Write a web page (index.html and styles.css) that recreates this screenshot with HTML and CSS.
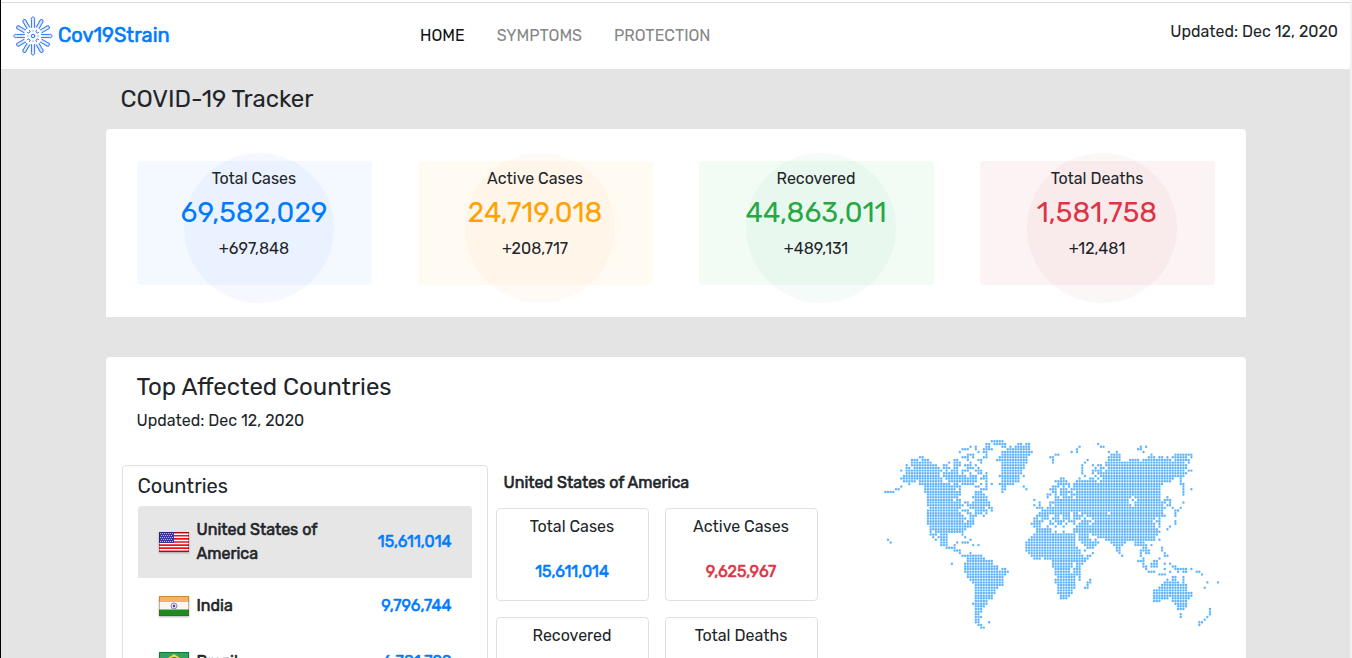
FILE: index.html
```html
<!DOCTYPE html>
<html lang="en">
<head>
<meta charset="utf-8">
<meta name="viewport" content="width=device-width, initial-scale=1">
<title>Cov19Strain</title>
<link rel="stylesheet" href="styles.css">
</head>
<body>
<div class="page">
  <header class="navbar">
    <a class="brand" href="#">
      <svg class="brand-icon" viewBox="-20 -20 40 40" aria-hidden="true">
        <defs>
          <path id="arm" d="M-1.6 -8.5V-16.4A1.8 1.8 0 1 1 1.6 -16.4V-8.5"/>
          <path id="arm-thin" d="M-1.6 -9.5V-16.4A1.7 1.7 0 1 1 1.6 -16.4V-9.5"/>
        </defs>
        <g class="brand-strokes">
          <use href="#arm"/><use href="#arm" transform="rotate(90)"/><use href="#arm" transform="rotate(180)"/><use href="#arm" transform="rotate(270)"/>
          <use href="#arm-thin" transform="rotate(30)"/><use href="#arm-thin" transform="rotate(60)"/>
          <use href="#arm-thin" transform="rotate(120)"/><use href="#arm-thin" transform="rotate(150)"/>
          <use href="#arm-thin" transform="rotate(210)"/><use href="#arm-thin" transform="rotate(240)"/>
          <use href="#arm-thin" transform="rotate(300)"/><use href="#arm-thin" transform="rotate(330)"/>
          <circle r="1.8"/>
          <path d="M-5.6 -3.4A1.5 1.5 0 1 0 -3.4 -5.6M5.6 -3.4A1.5 1.5 0 1 1 3.4 -5.6M-5.6 3.4A1.5 1.5 0 1 1 -3.4 5.6M5.6 3.4A1.5 1.5 0 1 0 3.4 5.6"/>
          <path d="M0 -5.2v.2M0 5v.2M-5.2 0h.2M5 0h.2"/>
        </g>
      </svg>
      <span>Cov19Strain</span>
    </a>
    <nav class="menu">
      <a class="menu-link active" href="#">HOME</a>
      <a class="menu-link" href="#symptoms">SYMPTOMS</a>
      <a class="menu-link" href="#protection">PROTECTION</a>
    </nav>
    <p class="updated">Updated: Dec 12, 2020</p>
  </header>

  <main class="container">
    <h1 class="title">COVID-19 Tracker</h1>
    <section class="stats">
      <article class="stat blue"><h2>Total Cases</h2><p class="stat-value">69,582,029</p><p>+697,848</p></article>
      <article class="stat orange"><h2>Active Cases</h2><p class="stat-value">24,719,018</p><p>+208,717</p></article>
      <article class="stat green"><h2>Recovered</h2><p class="stat-value">44,863,011</p><p>+489,131</p></article>
      <article class="stat red"><h2>Total Deaths</h2><p class="stat-value">1,581,758</p><p>+12,481</p></article>
    </section>

    <section class="affected">
      <div class="affected-head">
        <h2 class="title">Top Affected Countries</h2>
        <p>Updated: Dec 12, 2020</p>
      </div>
      <div class="affected-body">
        <div class="countries">
          <h3>Countries</h3>
          <ul>
            <li><button type="button" class="country selected">
              <svg class="flag" viewBox="0 0 30 20" aria-hidden="true">
                <path fill="#fff" d="M0 0h30v20H0z"/>
                <path stroke="#f01018" stroke-width="1.6" d="M0 .8h30M0 3.8h30M0 6.9h30M0 10h30M0 13.1h30M0 16.1h30M0 19.2h30"/>
                <path fill="#3a3a9c" d="M0 0h15v11H0z"/>
                <path stroke="#b4b4e0" stroke-dasharray="1 1" d="M1 1.5h13M2 3.5h12M1 5.5h13M2 7.5h12M1 9.5h13"/>
                <path fill="none" stroke="#000" stroke-opacity=".3" d="M.5 .5h29v19H.5z"/>
              </svg>
              <span class="country-name">United States of America</span><span class="country-count">15,611,014</span>
            </button></li>
            <li><button type="button" class="country">
              <svg class="flag" viewBox="0 0 30 20" aria-hidden="true">
                <path fill="#f7f7f7" d="M0 0h30v20H0z"/><path fill="#ffb066" d="M0 0h30v6H0z"/><path fill="#1f8a1f" d="M0 13.5h30V20H0z"/>
                <circle cx="15" cy="10" r="3" fill="#dcdcf2" stroke="#7474bd" stroke-width=".8"/><circle cx="15" cy="10" r="1.2" fill="#4848a0"/>
                <path fill="none" stroke="#643c00" stroke-opacity=".35" d="M.5 .5h29v19H.5z"/>
              </svg>
              <span class="country-name">India</span><span class="country-count">9,796,744</span>
            </button></li>
            <li><button type="button" class="country">
              <svg class="flag" viewBox="0 0 30 20" aria-hidden="true">
                <path fill="#35a25b" d="M0 0h30v20H0z"/><path fill="#f6d644" d="M15 2l12 8-12 8L3 10z"/><circle cx="15" cy="10" r="5" fill="#3c5a96"/>
                <path fill="none" stroke="#00642a" stroke-opacity=".7" d="M.5 .5h29v19H.5z"/>
              </svg>
              <span class="country-name">Brazil</span><span class="country-count">6,781,799</span>
            </button></li>
          </ul>
        </div>
        <div class="detail">
          <h3>United States of America</h3>
          <div class="detail-grid">
            <div class="tile"><h4>Total Cases</h4><p class="tile-value blue">15,611,014</p></div>
            <div class="tile"><h4>Active Cases</h4><p class="tile-value red">9,625,967</p></div>
            <div class="tile"><h4>Recovered</h4></div>
            <div class="tile"><h4>Total Deaths</h4></div>
          </div>
        </div>
        <div class="map">
          <svg viewBox="-0.5 -0.5 127 72" role="img" aria-label="World map"><path id="map-dots" class="map-dots"/></svg>
        </div>
      </div>
    </section>
  </main>
</div>
<script src="map.js"></script>
</body>
</html>
```

FILE: styles.css
```css
* { box-sizing: border-box; }

body, h1, h2, h3, h4, p, ul { margin: 0; padding: 0; }

body {
  background: #e4e4e4;
  color: #212529;
  font-family: Rubik, Roboto, "Liberation Sans", sans-serif;
  font-size: 16px;
  line-height: 24px;
}

h1, h2, h3, h4 { font-size: inherit; font-weight: 400; }
a { text-decoration: none; }
ul { list-style: none; }

.page {
  height: 100vh;
  overflow: hidden;
  border-left: 1px solid #000;
  border-right: 2px solid #f1f1f1;
}

.navbar {
  display: grid;
  grid-template-columns: 407px 1fr auto;
  align-items: center;
  height: 69px;
  padding: 0 12px;
  background: linear-gradient(#fff 2px, #dadada 2px, #dadada 3px, #fff 3px);
}

.brand {
  display: flex;
  align-items: center;
  gap: 5px;
  color: #007bff;
  font-size: 20px;
  -webkit-text-stroke: 0.6px;
}

.brand-icon { width: 40px; height: 40px; margin-top: 2px; }

.brand-strokes {
  fill: #dceaff;
  stroke: #2f74f0;
  stroke-width: 1;
  stroke-linecap: round;
}

.menu { display: flex; gap: 32px; padding-top: 2px; }
.menu-link { color: #868686; }
.menu-link.active { color: #111; }
.updated { padding-bottom: 6px; }

.container { max-width: 1140px; margin: 0 auto; }

.title { font-size: 24px; line-height: 30px; }
h1.title { padding: 15px; }

.stats {
  display: grid;
  grid-template-columns: repeat(4, 1fr);
  gap: 46px;
  padding: 32px 31px;
  background: #fff;
  border-radius: 4px 4px 0 0;
}

.stat {
  position: relative;
  isolation: isolate;
  height: 124px;
  padding-top: 6px;
  border-radius: 4px;
  text-align: center;
}

.stat::before {
  content: "";
  position: absolute;
  z-index: -1;
  top: -8px;
  left: 20%;
  width: 150px;
  height: 150px;
  border-radius: 50%;
}

.stat-value { font-size: 28px; line-height: 36px; margin: 4px 0 6px; }

.stat.blue { background: #f4f9ff; }
.stat.blue::before { background: rgba(0, 70, 255, .035); }
.stat.blue .stat-value { color: #007bff; }
.stat.orange { background: #fffaf2; }
.stat.orange::before { background: rgba(255, 120, 20, .04); }
.stat.orange .stat-value { color: #ffa200; }
.stat.green { background: #f2fcf5; }
.stat.green::before { background: rgba(0, 160, 80, .04); }
.stat.green .stat-value { color: #28a745; }
.stat.red { background: #fcf3f4; }
.stat.red::before { background: rgba(160, 40, 20, .035); }
.stat.red .stat-value { color: #dc3545; }

.affected {
  margin-top: 40px;
  padding: 15px 16px;
  background: #fff;
  border-radius: 4px;
}

.affected-head { padding: 0 15px; }
.affected-head p { margin-top: 7px; }

.affected-body {
  display: grid;
  grid-template-columns: 366fr 322fr 404fr;
  gap: 8px;
  margin-top: 7px;
}

.countries {
  margin-top: 25px;
  padding: 8px 15px;
  border: 1px solid #dee2e6;
  border-radius: 4px;
}

.countries h3 { font-size: 20px; margin-bottom: 8px; }

.country {
  display: flex;
  align-items: center;
  gap: 8px;
  width: 100%;
  min-height: 56px;
  padding: 12px 20px 12px 21px;
  border: 0;
  background: none;
  color: inherit;
  font: inherit;
  text-align: left;
  -webkit-text-stroke: 0.6px;
}

.country.selected { background: #e6e6e6; border-radius: 4px 4px 0 0; }
.flag { width: 30px; height: 20px; flex: none; box-shadow: 0 1px 2px rgba(0, 0, 0, .3); }
.country-name { max-width: 150px; }
.country-count { margin-left: auto; color: #007bff; }

.detail { margin-top: 31px; }
.detail h3 { padding-left: 8px; -webkit-text-stroke: 0.6px; }

.detail-grid {
  display: grid;
  grid-template-columns: 1fr 1fr;
  gap: 16px;
  margin-top: 13px;
}

.tile {
  height: 93px;
  padding-top: 6px;
  border: 1px solid #dee2e6;
  border-radius: 4px;
  text-align: center;
}

.tile-value { margin-top: 21px; -webkit-text-stroke: 0.6px; }
.tile-value.blue { color: #007bff; }
.tile-value.red { color: #dc3545; }

.map { padding: 0 8px 0 58px; }
.map svg { display: block; width: 100%; }

.map-dots {
  fill: none;
  stroke: #62b5fe;
  stroke-width: .92;
  stroke-linecap: round;
  stroke-dasharray: 0 1;
}
```

FILE: map.js
```js
// Each entry is one row of the dotted world map: column ranges that hold dots.
const rows = [
  "40-44",
  "38-39 41-45 50-51 53-54 80",
  "32 34 38-39 44-45 47 49-54 73 81-82 96 98",
  "29-31 34 37-40 46-54 72 95-96",
  "28 35 37-38 44-55 70 72 84 87 97",
  "31-33 38 44-54 64-65 85-88 100 109-115",
  "13-14 29-31 33 37-38 43-53 62-63 84-88 99-101 103-104 106 108-113 115",
  "10-12 14-16 26-27 31 35-36 42-53 63 76 84-88 92-95 97-107 109-114",
  "10-17 24 26-28 32 36 44-53 63 75 83-112 114",
  "8 10-19 22-23 26-28 30-32 34 44-52 74 78 80-81 83-113",
  "8-9 11-20 22-24 26-27 31-33 35 44-52 74 79 81-82 84-113",
  "6 8-21 23 25-27 29-31 34-36 44-51 74 78-81 83-112 114-115",
  "8-20 22-27 29 32 35-36 38 44-51 74 78 80-82 83-113",
  "7-20 22-30 32-34 37-38 43-50 52 75 79 81-112",
  "6-21 23-34 36-38 44-50 66-67 73 77-78 80 82-108 111",
  "7-11 13-21 24-34 38 44-50 64-68 72-79 81-107 111",
  "9 13-24 26-27 29-33 36 38 40 43-48 65-69 71-104 111-112",
  "6 15-28 34-35 38 44-45 52 63-65 67 69 71-103 112",
  "4-5 15-26 28 36-38 44-45 53 62-64 66-68 70-103 112 115",
  "0-3 15-28 34-36 44 63-64 66-70 72-103 112",
  "16-28 34-37 61-62 64 66-68 70-103 112",
  "16-27 33-38 61 64-65 67-70 72-92 94-103 106",
  "16-25 27-28 34-38 56 64-91 93 95-103 105-107",
  "16-28 30-31 33-39 58 62-91 94-105 107 112",
  "16-29 31-39 56 58 62 64-92 94-104 106-107",
  "17-28 32-37 39-40 57-59 61-105 108 111",
  "16-27 29-31 34-38 40 59-104 109-110",
  "16-28 31-32 34-36 38 58-69 71-72 74-83 85-104 109",
  "16-29 32-34 37 57-61 64-65 67-69 71-74 76-105 109",
  "16-30 32-33 56-57 59-61 63-65 67-69 71-73 75 78-101 103",
  "16-29 31-33 56-59 62 64-67 69-71 74-77 79-100 102-103 109",
  "16-33 55-58 62-63 65-66 68 71 73-76 78-101 103 109",
  "17-32 56-58 61 64 67 72-101 103 107",
  "17-30 57-62 71-102 106",
  "17 19-29 57-62 64 67 71-103",
  "17-19 21-23 29 56-71 73-76 78-102",
  "18 20-23 30 55-71 73-76 80-101",
  "1 19 21-23 32 54-71 73-77 79 83-101 103",
  "2 21-23 27 29-31 53-71 74-80 85-90 94-97",
  "21-23 26 33 35 53-71 75-79 86-89 94-98 100",
  "23-26 53-72 76-78 87-88 97-98 104",
  "26-28 53-73 75 87-88 96-99 104",
  "28 32 54-73 78 88 96 98-99 105",
  "29-36 55-74 76-77 89 96 105-106",
  "31-37 56-58 60-76 97 103",
  "31-40 63-75 95-97 101-102",
  "25 30-40 63-70 72-74 97 100-102 105 107",
  "30-42 63-70 72-73 97-98 100-102 108-109",
  "30-42 44-45 64-69 71-73 98 105 109-113 115",
  "30-46 64-69 71-73 99-101 107 110 112-113 117-118",
  "31-45 64-73 103-105 119",
  "31-44 65-71 73 108-109 112",
  "32-44 64-71 73 77 106 108-109 112",
  "33-44 64-71 76-77 105-110 112 121 125",
  "34-44 65-71 76 104-113",
  "34-42 65-71 75-76 103-113 120",
  "34-41 65-70 101-113",
  "34-41 65-70 101-115",
  "34-40 66-69 101-115",
  "34-40 66-68 101-106 108-114",
  "34-38 101-103 108-113",
  "33-38 109-113",
  "34-37 110-113",
  "34-36 110-112 122",
  "34-36 122",
  "34-35 111 122",
  "34-36 111 121",
  "34-35 120",
  "34-35 39 118-119",
  "35-36 118",
  "36-37"
];

const path = rows.map((row, y) => row.split(" ").map(range => {
  const [from, to = from] = range.split("-").map(Number);
  return `M${from} ${y}h${to - from + 0.1}`;
}).join("")).join("");

document.getElementById("map-dots").setAttribute("d", path);
```
